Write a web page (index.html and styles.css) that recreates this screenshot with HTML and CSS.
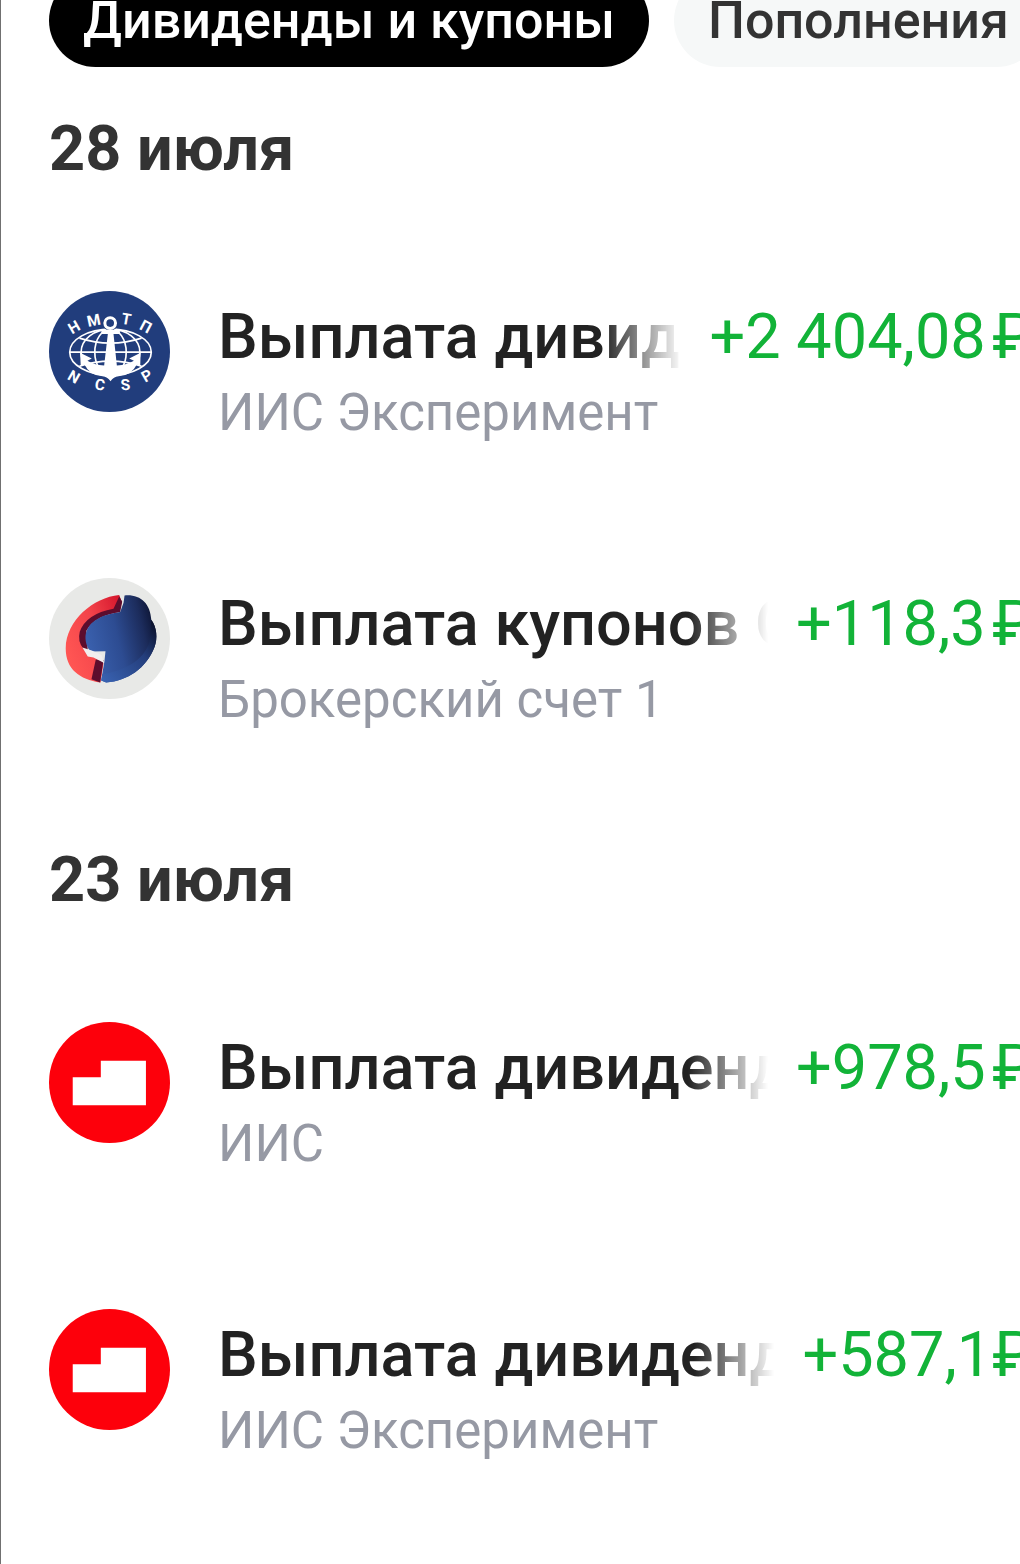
FILE: index.html
```html
<!DOCTYPE html>
<html lang="ru">
<head>
  <meta charset="UTF-8">
  <meta name="viewport" content="width=device-width, initial-scale=1.0">
  <title>Дивиденды и купоны</title>
  <link rel="stylesheet" href="styles.css">
</head>
<body>
  <nav class="filters">
    <button class="chip chip-active" type="button">Дивиденды и купоны</button>
    <button class="chip" type="button">Пополнения</button>
  </nav>

  <main class="operations">
    <section class="day">
      <h2>28 июля</h2>
      <div class="row">
        <!-- NCSP: globe with anchor -->
        <svg class="logo" viewBox="27 31 362 362" aria-hidden="true">
          <circle cx="208" cy="212" r="181" fill="#213d7c"/>
          <g fill="none" stroke="#fff" stroke-width="5">
            <ellipse cx="211" cy="214" rx="122" ry="69"/>
            <ellipse cx="211" cy="214" rx="88" ry="69"/>
            <ellipse cx="211" cy="214" rx="47" ry="69"/>
            <path d="M89 214H333M118 172Q211 202 304 172M118 256Q211 226 304 256"/>
          </g>
          <circle cx="210" cy="127" r="23" fill="#213d7c"/>
          <circle cx="210" cy="127" r="16" fill="none" stroke="#fff" stroke-width="9"/>
          <path fill="#fff" d="M184 147H239V160H220L230 254Q262 252 281 240L267 233L301 216L300 257L290 250Q274 284 235 286Q220 288 211 301Q202 288 187 286Q148 284 133 250L122 256L120 216L155 233L142 240Q160 252 192 254L203 160H184Z"/>
          <g class="logo-letters">
            <text transform="translate(102 140) rotate(-30)" y="15">Н</text>
            <text transform="translate(161 120) rotate(-12)" y="15">М</text>
            <text transform="translate(258 116) rotate(10)" y="15">Т</text>
            <text transform="translate(316 138) rotate(28)" y="15">П</text>
            <text transform="translate(101 289) rotate(30)" y="15">N</text>
            <text transform="translate(179 312) rotate(8)" y="15">C</text>
            <text transform="translate(256 312) rotate(-6)" y="15">S</text>
            <text transform="translate(320 285) rotate(-30)" y="15">P</text>
          </g>
        </svg>
        <div class="info">
          <p class="title">Выплата дивидендов</p>
          <p class="account">ИИС Эксперимент</p>
        </div>
        <p class="amount">+2 404,08&#8202;₽</p>
      </div>
      <div class="row">
        <!-- red and blue sphere -->
        <svg class="logo" viewBox="27 30 362 362" aria-hidden="true">
          <defs>
            <linearGradient id="blue" x1="0" y1="0.6" x2="1" y2="0.3">
              <stop offset="0" stop-color="#3b62b0"/>
              <stop offset="0.45" stop-color="#2d4c92"/>
              <stop offset="0.8" stop-color="#1c2c5c"/>
              <stop offset="1" stop-color="#0b1230"/>
            </linearGradient>
            <linearGradient id="red" x1="1" y1="0" x2="0" y2="0.6">
              <stop offset="0" stop-color="#d3122a"/>
              <stop offset="0.5" stop-color="#f2434a"/>
              <stop offset="1" stop-color="#ff5553"/>
            </linearGradient>
            <linearGradient id="rim" x1="0" y1="1" x2="1" y2="0">
              <stop offset="0" stop-color="#3a64b4"/>
              <stop offset="0.6" stop-color="#243e7c"/>
              <stop offset="1" stop-color="#070b20"/>
            </linearGradient>
          </defs>
          <circle cx="208" cy="211" r="181" fill="#e8e9e7"/>
          <path fill="url(#red)" d="M237 81C160 88 78 157 77 240C77 303 118 333 181 343L190 285L140 245L124 200L160 150L236 132L245 102Z"/>
          <path fill="#5c0d2d" d="M237 85L246 101L240 132Q165 142 139 188L143 247L129 240Q112 220 119 191Q138 137 220 122Z"/>
          <path fill="#5c0d2d" d="M167 274L190 275L180 343L154 333Z"/>
          <path fill="url(#blue)" d="M253 82C300 78 330 105 333 155C350 178 352 211 343 236C318 301 262 338 198 343L183 337L193 278L196 249L151 250C136 232 133 206 139 190C152 154 195 138 240 132L250 104Z"/>
          <path fill="url(#rim)" d="M333 155C350 178 352 211 343 236C318 301 262 338 198 343L183 337L187 318C250 307 310 278 327 222Z"/>
          <path fill="#f1eeee" d="M127 238L155 247L184 260L192 284L160 268L143 265Z"/>
        </svg>
        <div class="info">
          <p class="title">Выплата купонов ООО</p>
          <p class="account">Брокерский счет 1</p>
        </div>
        <p class="amount">+118,3&#8202;₽</p>
      </div>
    </section>

    <section class="day">
      <h2>23 июля</h2>
      <div class="row">
        <svg class="logo" viewBox="27 29 362 362" aria-hidden="true">
          <circle cx="208" cy="210" r="181" fill="#fd000b"/>
          <path fill="#fff" d="M98 194H182V145H317V278H98Z"/>
        </svg>
        <div class="info">
          <p class="title">Выплата дивидендов</p>
          <p class="account">ИИС</p>
        </div>
        <p class="amount">+978,5&#8202;₽</p>
      </div>
      <div class="row">
        <svg class="logo" viewBox="27 29 362 362" aria-hidden="true">
          <circle cx="208" cy="210" r="181" fill="#fd000b"/>
          <path fill="#fff" d="M98 194H182V145H317V278H98Z"/>
        </svg>
        <div class="info">
          <p class="title">Выплата дивидендов</p>
          <p class="account">ИИС Эксперимент</p>
        </div>
        <p class="amount">+587,1₽</p>
      </div>
    </section>
  </main>
</body>
</html>
```
FILE: styles.css
```css
body {
  margin: 0;
  min-height: 100vh;
  box-sizing: border-box;
  border-left: 1px solid #707070;
  background-color: #fff;
  font-family: Roboto, sans-serif;
  overflow: hidden;
}

h2, p {
  margin: 0;
}

/* the bar is scrolled partly out of view */
.filters {
  display: flex;
  gap: 25px;
  margin-top: -26px;
  padding-left: 48px;
}

.chip {
  flex: none;
  height: 93px;
  padding: 0 34px;
  border: none;
  border-radius: 47px;
  background-color: #f6f8f8;
  color: #333;
  font-family: inherit;
  font-size: 52px;
  font-weight: 500;
  cursor: pointer;
}

.chip-active {
  background-color: #000;
  color: #fff;
}

/* rows run a little past the right edge */
.operations {
  margin-right: -14px;
  padding-left: 48px;
}

h2 {
  padding: 44px 0 21px;
  color: #333;
  font-size: 63px;
  font-weight: 700;
  line-height: 76px;
}

.day + .day h2 {
  padding-top: 60px;
}

.row {
  display: flex;
  height: 287px;
  align-items: center;
}

.logo {
  flex: none;
  width: 121px;
  height: 121px;
  margin-right: 48px;
}

.logo-letters {
  fill: #fff;
  font-size: 46px;
  font-weight: 700;
  text-anchor: middle;
}

.info {
  flex: 1;
  min-width: 0;
  padding-top: 46px;
}

.title {
  overflow: hidden;
  color: #222;
  font-size: 63px;
  font-weight: 500;
  line-height: 76px;
  white-space: nowrap;
  mask-image: linear-gradient(to left, transparent, #000 80px);
}

.account {
  color: #9699a4;
  font-size: 51px;
  line-height: 76px;
  white-space: nowrap;
}

.amount {
  flex: none;
  align-self: flex-start;
  padding: 91px 0 0 28px;
  color: #12b338;
  font-size: 63px;
  line-height: 76px;
  white-space: nowrap;
}
```
